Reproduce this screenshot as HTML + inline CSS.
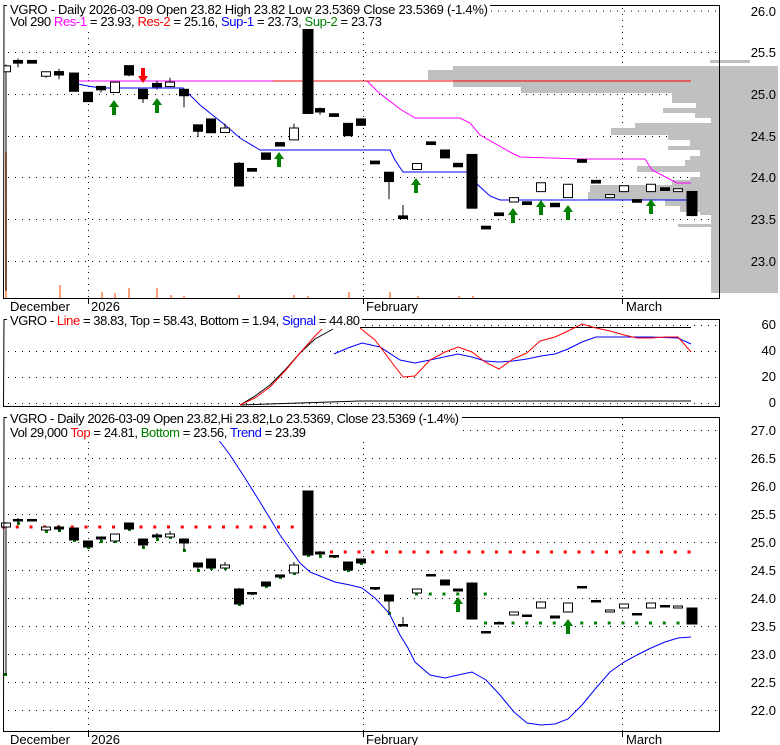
<!DOCTYPE html>
<html><head><meta charset="utf-8"><style>
html,body{margin:0;padding:0;background:#fff;}
svg{display:block;font-family:"Liberation Sans",Arial,sans-serif;font-size:13px;}
</style></head><body>
<svg width="780" height="745" viewBox="0 0 780 745" xmlns="http://www.w3.org/2000/svg">
<defs>
<clipPath id="c1"><rect x="4" y="6" width="715" height="292"/></clipPath>
<g id="cd" stroke="#000" stroke-width="1">
<g fill="none" vector-effect="non-scaling-stroke">
<line x1="6" y1="522" x2="6" y2="675" vector-effect="non-scaling-stroke"/>
<line x1="18" y1="518" x2="18" y2="524" vector-effect="non-scaling-stroke"/>
<line x1="46" y1="527" x2="46" y2="531" vector-effect="non-scaling-stroke"/>
<line x1="59" y1="525" x2="59" y2="532" vector-effect="non-scaling-stroke"/>
<line x1="101" y1="537" x2="101" y2="541" vector-effect="non-scaling-stroke"/>
<line x1="129" y1="523" x2="129" y2="530" vector-effect="non-scaling-stroke"/>
<line x1="143" y1="539" x2="143" y2="548" vector-effect="non-scaling-stroke"/>
<line x1="157" y1="533" x2="157" y2="539" vector-effect="non-scaling-stroke"/>
<line x1="170" y1="531" x2="170" y2="537" vector-effect="non-scaling-stroke"/>
<line x1="184" y1="539" x2="184" y2="551" vector-effect="non-scaling-stroke"/>
<line x1="198" y1="563" x2="198" y2="571" vector-effect="non-scaling-stroke"/>
<line x1="225" y1="562" x2="225" y2="568" vector-effect="non-scaling-stroke"/>
<line x1="239" y1="588" x2="239" y2="604" vector-effect="non-scaling-stroke"/>
<line x1="294" y1="562" x2="294" y2="573" vector-effect="non-scaling-stroke"/>
<line x1="320" y1="551" x2="320" y2="556" vector-effect="non-scaling-stroke"/>
<line x1="389" y1="595" x2="389" y2="613" vector-effect="non-scaling-stroke"/>
<line x1="403" y1="617" x2="403" y2="625" vector-effect="non-scaling-stroke"/>
</g>
<g fill="#000">
<rect x="54.5" y="527" width="9" height="2"/><rect x="69.5" y="528" width="9" height="12"/>
<rect x="83.5" y="541" width="9" height="6"/><rect x="96.5" y="537" width="9" height="2"/>
<rect x="124.5" y="523" width="9" height="6"/><rect x="138.5" y="539" width="9" height="6"/>
<rect x="152.5" y="535" width="9" height="2"/><rect x="179.5" y="539" width="9" height="4"/>
<rect x="193.5" y="563" width="9" height="4"/><rect x="206.5" y="559" width="9" height="9"/>
<rect x="234.5" y="589" width="9" height="15"/><rect x="261.5" y="582" width="9" height="4"/>
<rect x="275.5" y="575" width="9" height="2"/><rect x="303" y="491" width="10" height="64"/>
<rect x="315.5" y="552" width="9" height="2"/><rect x="343.5" y="562" width="9" height="8"/>
<rect x="356.5" y="559" width="9" height="4"/><rect x="384.5" y="595" width="9" height="6"/>
<rect x="440.5" y="580" width="9" height="5"/><rect x="453.5" y="589" width="9" height="2"/>
<rect x="467" y="583" width="10" height="36"/><rect x="522.5" y="615" width="9" height="1.5"/>
<rect x="550.5" y="616" width="9" height="2"/><rect x="687" y="608" width="10" height="16"/>
</g>
<g fill="#fff" vector-effect="non-scaling-stroke">
<rect x="1.5" y="523" width="9" height="4" vector-effect="non-scaling-stroke"/>
<rect x="41.5" y="527" width="9" height="3" vector-effect="non-scaling-stroke"/>
<rect x="110.5" y="534" width="9" height="7" vector-effect="non-scaling-stroke"/>
<rect x="165.5" y="534" width="9" height="3" vector-effect="non-scaling-stroke"/>
<rect x="220.5" y="565" width="9" height="3" vector-effect="non-scaling-stroke"/>
<rect x="289.5" y="565" width="9" height="8" vector-effect="non-scaling-stroke"/>
<rect x="412.5" y="589" width="9" height="4" vector-effect="non-scaling-stroke"/>
<rect x="509.5" y="612" width="9" height="3" vector-effect="non-scaling-stroke"/>
<rect x="536.5" y="602" width="9" height="6" vector-effect="non-scaling-stroke"/>
<rect x="563.5" y="603" width="9" height="9" vector-effect="non-scaling-stroke"/>
<rect x="605.5" y="610" width="9" height="2" vector-effect="non-scaling-stroke"/>
<rect x="619.5" y="604" width="9" height="4" vector-effect="non-scaling-stroke"/>
<rect x="646.5" y="603" width="9" height="5" vector-effect="non-scaling-stroke"/>
<rect x="673.5" y="606" width="9" height="2" vector-effect="non-scaling-stroke"/>
</g>
<g fill="#000">
<rect x="13.5" y="519.5" width="9" height="1.5"/><rect x="27.5" y="519.5" width="9" height="1.5"/>
<rect x="247.5" y="592.5" width="9" height="1.5"/><rect x="329.5" y="555.5" width="9" height="1.5"/>
<rect x="370.5" y="587.5" width="9" height="1.5"/><rect x="398.5" y="624.5" width="9" height="1.5"/>
<rect x="426.5" y="574.5" width="9" height="1.5"/><rect x="481.5" y="631.5" width="9" height="1.5"/>
<rect x="494.5" y="622.5" width="9" height="1.5"/><rect x="577.5" y="586.5" width="9" height="1.5"/>
<rect x="591.5" y="600.5" width="9" height="1.5"/><rect x="632.5" y="613.5" width="9" height="1.5"/>
<rect x="660.5" y="605.5" width="9" height="1.5"/>
</g>
</g>
<path id="ua" d="M0 0 L5 7 L2 7 L2 15 L-2 15 L-2 7 L-5 7 Z" fill="#008000"/>
</defs>

<!-- Panel 1 -->
<g stroke="#000" stroke-dasharray="1 6" stroke-width="1">
<line x1="8" y1="11" x2="720" y2="11"/><line x1="8" y1="52.5" x2="720" y2="52.5"/>
<line x1="8" y1="94.5" x2="720" y2="94.5"/><line x1="8" y1="136.5" x2="720" y2="136.5"/>
<line x1="8" y1="177.5" x2="720" y2="177.5"/><line x1="8" y1="219.5" x2="720" y2="219.5"/>
<line x1="8" y1="261.5" x2="720" y2="261.5"/>
<line x1="88.5" y1="8" x2="88.5" y2="298" stroke-dasharray="1 5"/>
<line x1="363.5" y1="8" x2="363.5" y2="298" stroke-dasharray="1 5"/>
<line x1="622.5" y1="8" x2="622.5" y2="298" stroke-dasharray="1 5"/>
</g>
<g fill="#c0c0c0">
<rect x="710" y="60" width="40" height="3"/>
<rect x="711" y="66" width="67" height="227"/>
<rect x="453" y="66" width="267" height="4"/><rect x="428" y="70" width="292" height="10"/>
<rect x="453" y="80" width="267" height="7"/><rect x="521" y="87" width="199" height="6"/>
<rect x="672" y="93" width="48" height="10"/><rect x="696" y="103" width="24" height="5"/>
<rect x="663" y="108" width="57" height="5"/><rect x="695" y="113" width="25" height="5"/>
<rect x="635" y="123" width="85" height="5"/><rect x="611" y="128" width="109" height="7"/>
<rect x="668" y="135" width="52" height="5"/><rect x="690" y="140" width="30" height="6"/>
<rect x="668" y="146" width="52" height="4"/><rect x="700" y="150" width="20" height="6"/>
<rect x="690" y="156" width="30" height="4"/><rect x="685" y="160" width="35" height="6"/>
<rect x="637" y="166" width="83" height="6"/><rect x="700" y="172" width="20" height="5"/>
<rect x="690" y="177" width="30" height="3"/><rect x="672" y="180" width="48" height="5"/>
<rect x="590" y="185" width="130" height="7"/><rect x="588" y="192" width="132" height="8"/>
<rect x="665" y="200" width="55" height="6"/><rect x="680" y="206" width="40" height="6"/>
<rect x="700" y="212" width="20" height="3"/><rect x="678" y="224" width="42" height="3"/>
</g>
<g fill="#ffa07a">
<rect x="5" y="152" width="2" height="146"/>
<rect x="59" y="285" width="2" height="13"/><rect x="101" y="292" width="2" height="6"/>
<rect x="114" y="293" width="2" height="5"/><rect x="128" y="288" width="2" height="10"/>
<rect x="156" y="288" width="2" height="10"/><rect x="170" y="295" width="2" height="3"/>
<rect x="183" y="296" width="2" height="2"/><rect x="238" y="295" width="2" height="3"/>
<rect x="293" y="295" width="2" height="3"/><rect x="307" y="296" width="2" height="2"/>
<rect x="348" y="292" width="2" height="6"/><rect x="389" y="292" width="2" height="6"/>
<rect x="417" y="296" width="2" height="2"/><rect x="458" y="296" width="2" height="2"/>
<rect x="472" y="296" width="2" height="2"/>
</g>
<polyline fill="none" stroke="#ff00ff" points="78,81 367,81 378,92 400,109 415,118 460,118 470,123 480,135 510,152 520,157 580,159 645,159 652,170 677,183 691,183"/>
<line x1="273" y1="81" x2="691" y2="81" stroke="#ff0000"/>
<polyline fill="none" stroke="#0000ff" points="78,84 88,86 100,88 183,88 200,105 225,125 240,138 260,150 390,150 395,160 403,172 468,172 478,185 490,196 500,200 691,200"/>
<g clip-path="url(#c1)"><use href="#cd" transform="matrix(1 0 0 1.48 0 -708.16)"/></g>
<use href="#ua" x="114" y="100"/><use href="#ua" x="157" y="98"/><use href="#ua" x="279" y="152"/>
<use href="#ua" x="416" y="178"/><use href="#ua" x="513" y="208"/><use href="#ua" x="541" y="200"/>
<use href="#ua" x="568" y="205"/><use href="#ua" x="651" y="199"/>
<path d="M143 83 L148 76 L145 76 L145 68 L141 68 L141 76 L138 76 Z" fill="#ff0000"/>
<path d="M4 5.5 H719.5 V298.5 H3.5 Z" fill="none" stroke="#000"/>
<rect x="7" y="0" width="483" height="29" fill="#fff"/>
<text x="10" y="14" textLength="478">VGRO - Daily 2026-03-09 Open 23.82  High 23.82  Low 23.5369  Close 23.5369 (-1.4%)</text>
<text x="10" y="26" textLength="372">Vol 290 <tspan fill="#ff00ff">Res-1</tspan> = 23.93, <tspan fill="#ff0000">Res-2</tspan> = 25.16, <tspan fill="#0000ff">Sup-1</tspan> = 23.73, <tspan fill="#008000">Sup-2</tspan> = 23.73</text>
<g text-anchor="end"><text x="776" y="16">26.0</text><text x="776" y="57">25.5</text><text x="776" y="99">25.0</text><text x="776" y="141">24.5</text><text x="776" y="182">24.0</text><text x="776" y="224">23.5</text><text x="776" y="266">23.0</text></g>

<!-- Date axis 1 -->
<g stroke="#000"><line x1="88.5" y1="299" x2="88.5" y2="304"/><line x1="363.5" y1="299" x2="363.5" y2="304"/><line x1="622.5" y1="299" x2="622.5" y2="304"/></g>
<text x="10" y="311">December</text><text x="91" y="311">2026</text><text x="366" y="311">February</text><text x="626" y="311">March</text>

<!-- Panel 2 -->
<g stroke="#000" stroke-dasharray="1 6">
<line x1="8" y1="325.5" x2="720" y2="325.5"/><line x1="8" y1="351.5" x2="720" y2="351.5"/>
<line x1="8" y1="377.5" x2="720" y2="377.5"/><line x1="8" y1="403.5" x2="720" y2="403.5"/>
</g>
<polyline fill="none" stroke="#000" points="240,405 255,396 270,385 285,370 300,353 315,339 333,329"/>
<line x1="360" y1="327.5" x2="691" y2="327.5" stroke="#000"/>
<polyline fill="none" stroke="#000" points="240,405 300,403 360,401 691,401"/>
<polyline fill="none" stroke="#ff0000" points="240,405 255,398 270,387 285,371 300,353 315,336 322,329"/>
<polyline fill="none" stroke="#0000ff" points="334,354 348,348 362,343 380,347 400,360 415,363 430,360 458,354 472,357 485,361 499,362 513,361 527,359 541,356 555,354 568,349 582,342 596,337 624,337 651,337 678,338 691,344"/>
<polyline fill="none" stroke="#ff0000" points="360,328 375,340 390,360 403,377 415,376 430,360 445,352 458,347 472,352 485,362 499,369 513,359 527,353 540,341 555,337 568,331 582,324 596,328 610,331 624,335 637,338 651,338 665,337 678,337 691,352"/>
<path d="M4 319.5 H719.5 V406.5 H3.5 Z" fill="none" stroke="#000"/>
<rect x="7" y="314" width="355" height="12" fill="#fff"/>
<text x="10" y="325" textLength="350">VGRO - <tspan fill="#ff0000">Line</tspan> = 38.83, Top = 58.43, Bottom = 1.94, <tspan fill="#0000ff">Signal</tspan> = 44.80</text>
<g text-anchor="end"><text x="776" y="329">60</text><text x="776" y="355">40</text><text x="776" y="381">20</text><text x="776" y="407">0</text></g>

<!-- Panel 3 -->
<g stroke="#000" stroke-dasharray="1 6">
<line x1="8" y1="430.5" x2="720" y2="430.5"/><line x1="8" y1="458.5" x2="720" y2="458.5"/>
<line x1="8" y1="486.5" x2="720" y2="486.5"/><line x1="8" y1="514.5" x2="720" y2="514.5"/>
<line x1="8" y1="542.5" x2="720" y2="542.5"/><line x1="8" y1="570.5" x2="720" y2="570.5"/>
<line x1="8" y1="598.5" x2="720" y2="598.5"/><line x1="8" y1="626.5" x2="720" y2="626.5"/>
<line x1="8" y1="654.5" x2="720" y2="654.5"/><line x1="8" y1="682.5" x2="720" y2="682.5"/>
<line x1="8" y1="710.5" x2="720" y2="710.5"/>
<line x1="88.5" y1="418" x2="88.5" y2="731" stroke-dasharray="1 5"/>
<line x1="363.5" y1="418" x2="363.5" y2="731" stroke-dasharray="1 5"/>
<line x1="622.5" y1="418" x2="622.5" y2="731" stroke-dasharray="1 5"/>
</g>
<line x1="2" y1="527" x2="296" y2="527" stroke="#ff0000" stroke-width="3" stroke-dasharray="3 10.75"/>
<line x1="330" y1="552" x2="694" y2="552" stroke="#ff0000" stroke-width="3" stroke-dasharray="3 10.75"/>
<line x1="415" y1="594" x2="488" y2="594" stroke="#008000" stroke-width="3" stroke-dasharray="3 10.75"/>
<line x1="484" y1="623" x2="694" y2="623" stroke="#008000" stroke-width="3" stroke-dasharray="3 10.75"/>
<g fill="#008000">
<rect x="4" y="673" width="3" height="3"/><rect x="17" y="522" width="3" height="3"/><rect x="45" y="530" width="3" height="3"/>
<rect x="58" y="529" width="3" height="3"/><rect x="73" y="539" width="3" height="3"/><rect x="87" y="546" width="3" height="3"/>
<rect x="100" y="540" width="3" height="3"/><rect x="114" y="540" width="3" height="3"/><rect x="128" y="528" width="3" height="3"/>
<rect x="142" y="546" width="3" height="3"/><rect x="156" y="538" width="3" height="3"/><rect x="169" y="536" width="3" height="3"/>
<rect x="183" y="549" width="3" height="3"/><rect x="197" y="569" width="3" height="3"/><rect x="210" y="567" width="3" height="3"/>
<rect x="224" y="567" width="3" height="3"/><rect x="238" y="603" width="3" height="3"/><rect x="251" y="592" width="3" height="3"/>
<rect x="265" y="585" width="3" height="3"/><rect x="279" y="576" width="3" height="3"/><rect x="293" y="572" width="3" height="3"/>
<rect x="307" y="554" width="3" height="3"/><rect x="319" y="555" width="3" height="3"/><rect x="333" y="555" width="3" height="3"/>
<rect x="347" y="569" width="3" height="3"/><rect x="360" y="562" width="3" height="3"/><rect x="374" y="587" width="3" height="3"/>
<rect x="388" y="612" width="3" height="3"/>
</g>
<polyline fill="none" stroke="#0000ff" points="218,439 230,455 245,478 260,502 280,535 300,563 310,572 320,576 335,582 350,585 362,588 375,598 389,613 400,635 408,648 415,662 430,675 445,678 458,675 472,672 486,680 500,695 514,712 527,723 541,725 555,724 568,719 582,705 596,688 610,672 624,662 637,655 651,648 665,642 678,638 691,637"/>
<use href="#cd"/>
<use href="#ua" x="458" y="597"/><use href="#ua" x="568" y="619"/>
<path d="M4 417.5 H719.5 V731.5 H3.5 Z" fill="none" stroke="#000"/>
<rect x="7" y="411" width="455" height="30" fill="#fff"/>
<text x="10" y="423" textLength="449">VGRO - Daily 2026-03-09 Open 23.82,Hi 23.82,Lo 23.5369, Close 23.5369 (-1.4%)</text>
<text x="10" y="437" textLength="296">Vol 29,000 <tspan fill="#ff0000">Top</tspan> = 24.81, <tspan fill="#008000">Bottom</tspan> = 23.56, <tspan fill="#0000ff">Trend</tspan> = 23.39</text>
<g text-anchor="end"><text x="776" y="435">27.0</text><text x="776" y="463">26.5</text><text x="776" y="491">26.0</text><text x="776" y="519">25.5</text><text x="776" y="547">25.0</text><text x="776" y="575">24.5</text><text x="776" y="603">24.0</text><text x="776" y="631">23.5</text><text x="776" y="659">23.0</text><text x="776" y="687">22.5</text><text x="776" y="715">22.0</text></g>
<g stroke="#000"><line x1="88.5" y1="732" x2="88.5" y2="737"/><line x1="363.5" y1="732" x2="363.5" y2="737"/><line x1="622.5" y1="732" x2="622.5" y2="737"/></g>
<text x="10" y="744">December</text><text x="91" y="744">2026</text><text x="366" y="744">February</text><text x="626" y="744">March</text>
</svg>
</body></html>
